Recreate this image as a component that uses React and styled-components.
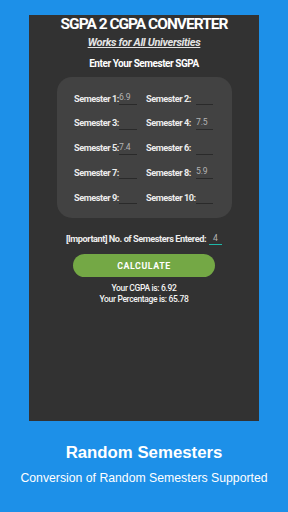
import React from "react"
import styled, { createGlobalStyle } from "styled-components"

const GlobalStyle = createGlobalStyle`
  html, body {
    margin: 0;
    padding: 0;
    background: #1d90e8;
  }
  * {
    box-sizing: border-box;
  }
`

const Page = styled.div`
  width: 288px;
  height: 512px;
  background: #1d90e8;
  display: flex;
  flex-direction: column;
  align-items: center;
  overflow: hidden;
`

const Screen = styled.div`
  margin-top: 15px;
  width: 230px;
  height: 406px;
  background: #323232;
  display: flex;
  flex-direction: column;
  align-items: center;
  font-family: "Roboto", "DejaVu Sans Condensed", sans-serif;
  color: #f2f2f2;
`

const Title = styled.h1`
  margin: 0;
  font-size: 15.5px;
  line-height: 18px;
  font-weight: 700;
  letter-spacing: -1px;
  color: #ffffff;
`

const Subtitle = styled.div`
  margin-top: 3px;
  font-size: 11px;
  line-height: 14px;
  font-style: italic;
  font-weight: 700;
  letter-spacing: -0.35px;
  text-decoration: underline;
  color: #e4e4e4;
`

const Heading = styled.div`
  margin-top: 7px;
  font-size: 10px;
  line-height: 14px;
  font-weight: 700;
  letter-spacing: -0.45px;
  color: #ffffff;
`

const Card = styled.div`
  margin-top: 6px;
  align-self: flex-start;
  margin-left: 28px;
  width: 175px;
  height: 141px;
  background: #424242;
  border-radius: 15px;
  padding: 13px 0 0 17px;
  display: grid;
  grid-template-columns: 45px 18px 9px 50px 17px;
  grid-auto-rows: 16px;
  row-gap: 8.75px;
  align-items: center;
`

const Label = styled.span`
  font-size: 9.2px;
  font-weight: 700;
  letter-spacing: -0.45px;
  color: #ececec;
  white-space: nowrap;
  grid-column: ${p => (p.$col === 2 ? 4 : 1)};
`

const Field = styled.span`
  grid-column: ${p => (p.$col === 2 ? 5 : 2)};
  height: 14px;
  border-bottom: 1px solid #2a2a2a;
  font-size: 8.6px;
  line-height: 13px;
  letter-spacing: -0.2px;
  color: #b4b4b4;
`

const CountRow = styled.div`
  margin-top: 13px;
  display: flex;
  align-items: center;
  gap: 3px;
  height: 14px;
`

const CountLabel = styled.span`
  font-size: 9.2px;
  font-weight: 700;
  letter-spacing: -0.45px;
  color: #ececec;
  white-space: nowrap;
`

const CountField = styled.span`
  width: 13px;
  height: 13px;
  border-bottom: 1.5px solid #1fb8a8;
  font-size: 8.6px;
  line-height: 12px;
  text-align: center;
  color: #b4b4b4;
`

const Button = styled.button`
  margin-top: 9px;
  width: 142px;
  height: 23px;
  border: none;
  border-radius: 12px;
  background: #74a845;
  color: #ffffff;
  font-family: inherit;
  font-size: 8.8px;
  font-weight: 700;
  letter-spacing: 0.6px;
`

const Result = styled.div`
  font-size: 8.5px;
  line-height: 11px;
  font-weight: 500;
  letter-spacing: -0.35px;
  color: #f4f4f4;
  margin-top: ${p => p.$gap || 0}px;
`

const Caption = styled.div`
  font-family: "Liberation Sans", Arial, sans-serif;
  color: #ffffff;
  text-align: center;
`

const CaptionTitle = styled.div`
  margin-top: 22px;
  font-size: 16.8px;
  line-height: 20px;
  font-weight: 700;
`

const CaptionText = styled.div`
  margin-top: 7px;
  font-size: 12.25px;
  line-height: 16px;
`

const semesters = [
  ["Semester 1:", "6.9", "Semester 2:", ""],
  ["Semester 3:", "", "Semester 4:", "7.5"],
  ["Semester 5:", "7.4", "Semester 6:", ""],
  ["Semester 7:", "", "Semester 8:", "5.9"],
  ["Semester 9:", "", "Semester 10:", ""]
]

export default function App() {
  return (
    <Page>
      <GlobalStyle />
      <Screen>
        <Title>SGPA 2 CGPA CONVERTER</Title>
        <Subtitle>Works for All Universities</Subtitle>
        <Heading>Enter Your Semester SGPA</Heading>
        <Card>
          {semesters.map((row, i) => (
            <React.Fragment key={i}>
              <Label $col={1}>{row[0]}</Label>
              <Field $col={1}>{row[1]}</Field>
              <Label $col={2}>{row[2]}</Label>
              <Field $col={2}>{row[3]}</Field>
            </React.Fragment>
          ))}
        </Card>
        <CountRow>
          <CountLabel>[Important] No. of Semesters Entered:</CountLabel>
          <CountField>4</CountField>
        </CountRow>
        <Button>CALCULATE</Button>
        <Result $gap={6}>Your CGPA is: 6.92</Result>
        <Result>Your Percentage is: 65.78</Result>
      </Screen>
      <Caption>
        <CaptionTitle>Random Semesters</CaptionTitle>
        <CaptionText>Conversion of Random Semesters Supported</CaptionText>
      </Caption>
    </Page>
  )
}
